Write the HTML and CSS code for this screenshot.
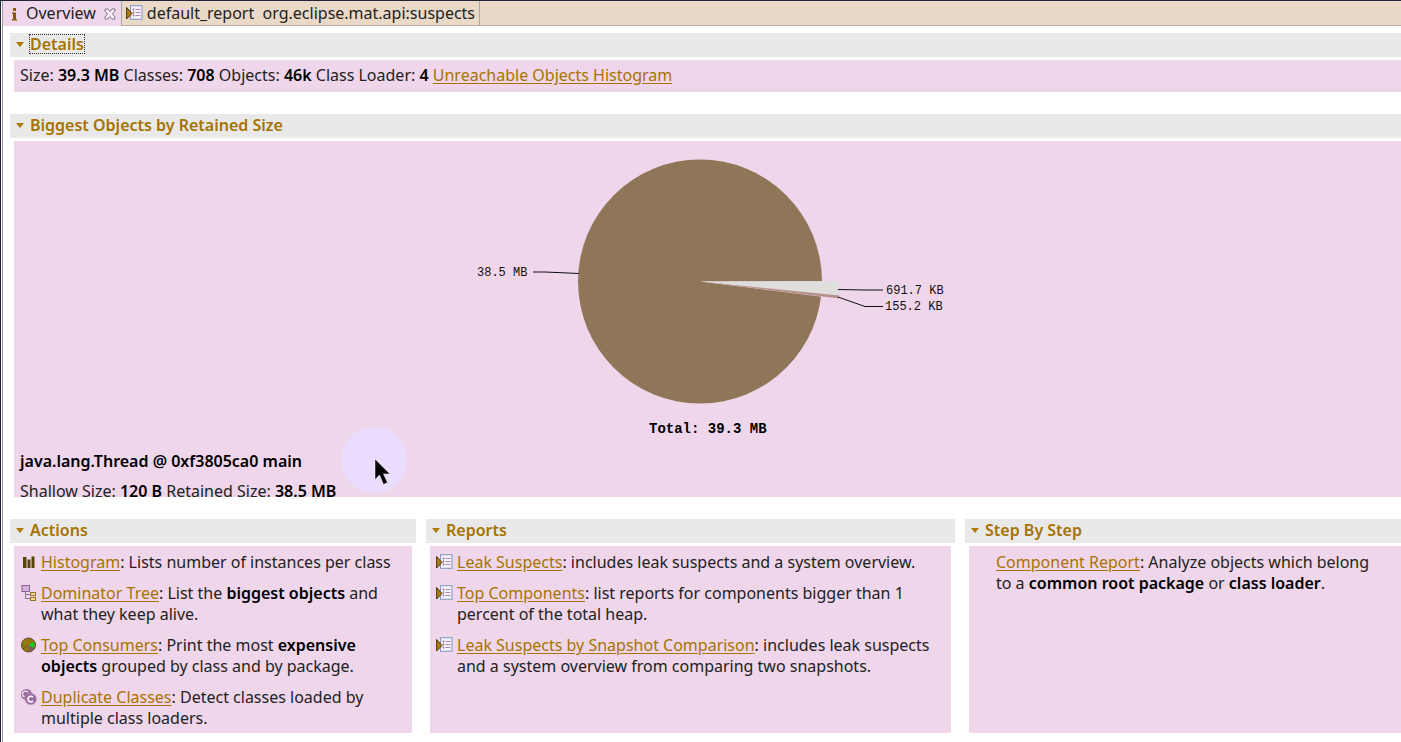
FILE: index.html
```html
<!DOCTYPE html>
<html lang="en">
<head>
<meta charset="utf-8">
<title>Overview</title>
<link rel="stylesheet" href="styles.css">
</head>
<body>
<svg class="defs" aria-hidden="true">
  <symbol id="report" viewBox="0 0 17 16">
    <rect x="4.5" y=".7" width="11.5" height="13.6" fill="#f6f0fa" stroke="#8196c4"/>
    <path d="M6.5 4.5h2M6.5 7.500h2M6.500 10.500h2" stroke="#c090a0"/>
    <path d="M9.500 4.500h5M9.500 7.500h5M9.500 10.500h5" stroke="#a98db0"/>
    <path d="M7.500 3v9" stroke="#8b7b96" stroke-width=".6"/>
    <path d="M.6 2.500 6 8.500.6 14z" fill="#b17c10" stroke="#4d3508"/>
  </symbol>
</svg>
<div class="editor">
  <nav class="tabs">
    <div class="tab active">
      <svg class="info" viewBox="0 0 8 16"><path d="M3 2h3v3H3zM2 6.500h4V13h1v1.500H2V13h1V8H2z" fill="#8a5a08"/></svg>
      <button class="tab-name">Overview</button>
      <button class="close" aria-label="Close"><svg viewBox="0 0 12 12"><path d="M1 1h3l2 2.500L8 1h3v2L8.500 6 11 9v2H8L6 8.500 4 11H1V9l2.500-3L1 3z" fill="#f8eef8" stroke="#817583"/></svg></button>
    </div>
    <div class="tab">
      <svg class="icon"><use href="#report"/></svg>
      <button class="tab-name">default_report&nbsp; org.eclipse.mat.api:suspects</button>
    </div>
  </nav>
  <main>
    <section>
      <h2><button class="toggle"><span class="focused">Details</span></button></h2>
      <div class="body details">Size: <b>39.3 MB</b> Classes: <b>708</b> Objects: <b>46k</b> Class Loader: <b>4</b> <a href="#">Unreachable Objects Histogram</a></div>
    </section>
    <section>
      <h2><button class="toggle"><span>Biggest Objects by Retained Size</span></button></h2>
      <div class="body biggest">
        <svg class="chart" viewBox="468 141 480 304">
          <circle cx="700" cy="281.500" r="122" fill="#8f7658"/>
          <path d="M700 281.500 840 281V299z" fill="#efd6ea"/>
          <path d="M700 281.500H839V296z" fill="#dededc"/>
          <path d="M700 281.500 839 295.500V298.500z" fill="#b78e88"/>
          <path d="M533 272h12l34 1.500M838 289.500l27 .5h18M838 297l27 9.500h18" fill="none" stroke="#111"/>
          <text x="477" y="276">38.5 MB</text>
          <text x="886" y="294">691.7 KB</text>
          <text x="885" y="310">155.2 KB</text>
          <text class="total" x="649" y="433">Total: 39.3 MB</text>
        </svg>
        <p><b>java.lang.Thread @ 0xf3805ca0 main</b></p>
        <p>Shallow Size: <b>120 B</b> Retained Size: <b>38.5 MB</b></p>
        <svg class="pointer" viewBox="0 0 66 66"><circle cx="33" cy="33" r="33" fill="#eadcff"/><path d="M34 32v20.500l4.500-4.500 4 9.500 4-2-4-8.500h6.500z" fill="#000" stroke="#fff" stroke-width=".5"/></svg>
      </div>
    </section>
    <div class="columns">
      <section>
        <h2><button class="toggle"><span>Actions</span></button></h2>
        <ul class="body">
          <li><svg class="icon" viewBox="0 0 17 16"><path d="M3 3h3.500v11H3zM7.500 5.500h3V14h-3zM11.500 2.500h3V14h-3z" fill="#5a4208"/></svg>
            <div><a href="#">Histogram</a>: Lists number of instances per class</div></li>
          <li><svg class="icon" viewBox="0 0 17 16"><path d="M5.500 7v6.500h5M5.500 9.500h5" fill="none" stroke="#85768a"/><rect x="2" y=".5" width="7.500" height="6" fill="#d7afdf" stroke="#866292"/><rect x="10.500" y="7.500" width="5" height="3" fill="#f4dc88" stroke="#96712a"/><rect x="10.500" y="12.500" width="5" height="3" fill="#f4dc88" stroke="#96712a"/></svg>
            <div><a href="#">Dominator Tree</a>: List the <b>biggest objects</b> and what they keep alive.</div></li>
          <li><svg class="icon" viewBox="0 0 17 16"><circle cx="8.500" cy="8" r="7" fill="#93780f" stroke="#5d4b20"/><path d="m8.500 8 6 2.500A7 7 0 0 1 9 15z" fill="#805768"/><path d="m8.500 8 5-3 1.500 3-2 3z" fill="#18c82c"/><path d="M8 8 3 12" stroke="#60500d" stroke-width=".8"/></svg>
            <div><a href="#">Top Consumers</a>: Print the most <b>expensive objects</b> grouped by class and by package.</div></li>
          <li><svg class="icon" viewBox="0 0 17 16"><circle cx="6.500" cy="5.500" r="5.500" fill="#9b6ca1"/><path d="M8 3.500A3 3 0 1 0 4.500 8" fill="none" stroke="#f5e7f6" stroke-width="1.300"/><circle cx="10.700" cy="10" r="5.800" fill="#9b6ca1" stroke="#bd98c1" stroke-width=".5"/><path d="M12.900 8.200a2.800 2.800 0 1 0 0 3.700" fill="none" stroke="#fff" stroke-width="1.700"/></svg>
            <div><a href="#">Duplicate Classes</a>: Detect classes loaded by multiple class loaders.</div></li>
        </ul>
      </section>
      <section>
        <h2><button class="toggle"><span>Reports</span></button></h2>
        <ul class="body">
          <li><svg class="icon"><use href="#report"/></svg><div><a href="#">Leak Suspects</a>: includes leak suspects and a system overview.</div></li>
          <li><svg class="icon"><use href="#report"/></svg><div><a href="#">Top Components</a>: list reports for components bigger than 1 percent of the total heap.</div></li>
          <li><svg class="icon"><use href="#report"/></svg><div><a href="#">Leak Suspects by Snapshot Comparison</a>: includes leak suspects and a system overview from comparing two snapshots.</div></li>
        </ul>
      </section>
      <section class="last">
        <h2><button class="toggle"><span>Step By Step</span></button></h2>
        <ul class="body">
          <li><div><a href="#">Component Report</a>: Analyze objects which belong to a <b>common root package</b> or <b>class loader</b>.</div></li>
        </ul>
      </section>
    </div>
  </main>
</div>
</body>
</html>
```
FILE: styles.css
```css
* { box-sizing: border-box; }
body {
  margin: 0;
  background: #fff;
  color: #222;
  font: 16px/21px "Noto Sans", "Open Sans", sans-serif;
  overflow: hidden;
}
.defs { position: absolute; width: 0; height: 0; }
button { border: 0; padding: 0; background: none; color: inherit; font: inherit; }
b { color: #000; font-weight: 600; }
a { color: #a87300; text-underline-offset: 2px; }
.editor {
  min-height: 100vh;
  border-top: 1px solid #25253a;
  border-left: 1px solid #25253a;
  padding-left: 1px;
  background: #fff;
}
.tabs {
  display: flex;
  height: 25px;
  background: #ead9c7;
  border-left: 1px solid #999;
  border-bottom: 1px solid #b9aea5;
}
.tab {
  display: flex;
  align-items: center;
  gap: 4px;
  padding: 0 4px;
  border-right: 1px solid #aaa;
}
.tab.active { background: #efd6ea; gap: 8px; padding: 0 5px 0 7px; margin-bottom: -1px; }
.tab svg { flex: none; }
.info { width: 8px; height: 16px; }
.close { display: flex; }
.close svg { width: 12px; height: 12px; }
.icon { width: 17px; height: 16px; }
main { border-left: 1px solid #999; padding: 7px 0 9px 7px; }
h2 {
  display: flex;
  align-items: center;
  margin: 0;
  height: 24px;
  padding-bottom: 2px;
  background: #e9e9e9;
  font-size: 16px;
  line-height: 22px;
  font-weight: 600;
}
.toggle { display: flex; align-items: center; gap: 6px; padding-left: 6px; color: #a67300; }
.toggle::before {
  content: "";
  border: 4px solid transparent;
  border-top: 5px solid #b07909;
  border-bottom: 0;
}
.focused { line-height: 18px; outline: 1px dotted #333; }
.body { margin: 3px 0 0 4px; background: #efd6ea; }
.details { padding: 5px 6px 6px; margin-bottom: 22px; }
.biggest { position: relative; height: 356px; overflow: hidden; margin-bottom: 22px; }
.chart { display: block; width: 480px; height: 304px; margin: 0 auto; }
.chart text { font: 12px "Liberation Mono", monospace; fill: #111; }
.chart .total { font-size: 14px; font-weight: bold; fill: #000; }
.biggest p { margin: 6px 6px 9px; }
.pointer { position: absolute; left: 327px; top: 286px; width: 66px; height: 66px; }
.columns {
  display: grid;
  grid-template-columns: minmax(0, 406fr) minmax(0, 529fr) minmax(0, 436fr);
  gap: 10px;
}
.columns section { display: flex; flex-direction: column; }
.columns .body {
  flex: 1;
  display: flex;
  flex-direction: column;
  gap: 10px;
  margin: 3px 4px 0;
  padding: 6px 10px 4px 6px;
  list-style: none;
}
.columns .last .body { margin-right: 0; padding: 6px 20px 4px 27px; }
li { display: flex; gap: 4px; }
li .icon { flex: none; margin-top: 2px; }
```
